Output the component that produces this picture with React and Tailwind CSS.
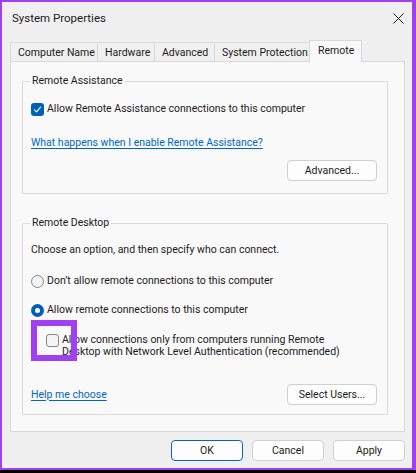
const TABS = [
  { label: 'Computer Name', w: 'w-[88px]' },
  { label: 'Hardware', w: 'w-[58px]' },
  { label: 'Advanced', w: 'w-[61px]' },
  { label: 'System Protection', w: 'w-[96px]' },
];

function CheckBox({ checked }) {
  if (checked) {
    return (
      <span className="block w-[13px] h-[13px] shrink-0 rounded-[3px] bg-[#005fb8] flex items-center justify-center">
        <svg width="9" height="9" viewBox="0 0 9 9" fill="none">
          <path d="M1.5 4.8 L3.6 6.8 L7.6 2.2" stroke="#fff" strokeWidth="1.1" strokeLinecap="round" strokeLinejoin="round" />
        </svg>
      </span>
    );
  }
  return <span className="block w-[13px] h-[13px] shrink-0 rounded-[3px] border border-[#868686] bg-[#f4f4f4]" />;
}

function Radio({ checked }) {
  if (checked) {
    return (
      <span className="w-[13px] h-[13px] shrink-0 rounded-full bg-[#005fb8] flex items-center justify-center">
        <span className="w-[5px] h-[5px] rounded-full bg-white" />
      </span>
    );
  }
  return <span className="w-[13px] h-[13px] shrink-0 rounded-full border border-[#868686] bg-[#f4f4f4]" />;
}

function Button({ children, primary, className = '' }) {
  return (
    <button
      className={
        'h-[21px] rounded-[4px] bg-[#fdfdfd] text-[#1b1b1b] leading-[16px] flex items-center justify-center ' +
        (primary ? 'border border-[#0067c0] ' : 'border border-[#d0d0d0] ') +
        className
      }
    >
      {children}
    </button>
  );
}

function Group({ title, children, className = '' }) {
  return (
    <fieldset className={'border border-[#dcdcdc] rounded-[1px] pl-[8px] pr-[10px] ' + className}>
      <legend className="px-[2px] -ml-[1px] leading-[16px] text-[#1b1b1b]">{title}</legend>
      {children}
    </fieldset>
  );
}

export default function App() {
  return (
    <div className="w-[416px] h-[473px] bg-black pb-[3px]">
      <div className="h-full bg-[#a13ff2] pt-[2px] pl-[2px] pr-[4px] pb-[2px]">
        <div className="h-full bg-[#f0f0f0] flex flex-col text-[10.5px] text-[#1b1b1b] font-['Roboto',sans-serif]">
          {/* title bar */}
          <div className="h-[32px] flex items-center justify-between pl-[10px] pr-[8px]">
            <span className="text-[11.5px] leading-[16px]">System Properties</span>
            <svg width="11" height="11" viewBox="0 0 11 11">
              <path d="M0.5 0.5 L10.5 10.5 M10.5 0.5 L0.5 10.5" stroke="#1b1b1b" strokeWidth="1" />
            </svg>
          </div>

          {/* tabs */}
          <div className="mt-[6px] ml-[8px] flex items-end h-[21px]">
            {TABS.map((t) => (
              <div
                key={t.label}
                className={
                  t.w +
                  ' h-[19px] border border-b-0 border-[#d9d9d9] -ml-px first:ml-0 bg-[#f0f0f0] pl-[7px] leading-[19px] whitespace-nowrap'
                }
              >
                {t.label}
              </div>
            ))}
            <div className="w-[53px] h-[22px] -ml-px border border-b-0 border-[#d9d9d9] bg-[#f9f9f9] pl-[8px] leading-[19px] relative z-10 -mb-px">
              Remote
            </div>
          </div>

          {/* panel */}
          <div className="ml-[8px] mr-[7px] h-[371px] bg-[#f9f9f9] border border-[#d9d9d9] pt-[11px] pl-[11px] pr-[16px]">
            <Group title="Remote Assistance" className="pb-[12px]">
              <div className="mt-[12px] flex items-center gap-[3px] h-[16px]">
                <CheckBox checked />
                <span className="leading-[16px] whitespace-nowrap">Allow Remote Assistance connections to this computer</span>
              </div>
              <div className="mt-[18px] h-[16px] leading-[16px]">
                <span className="text-[#0067c0] underline underline-offset-[2px]">What happens when I enable Remote Assistance?</span>
              </div>
              <div className="mt-[9px] flex justify-end">
                <Button className="w-[90px]">Advanced...</Button>
              </div>
            </Group>

            <Group title="Remote Desktop" className="mt-[21px] pb-[9px]">
              <div className="mt-[11px] leading-[16px] h-[16px]">Choose an option, and then specify who can connect.</div>
              <div className="mt-[15px] flex items-center gap-[3px] h-[16px]">
                <Radio />
                <span className="leading-[16px]">Don’t allow remote connections to this computer</span>
              </div>
              <div className="mt-[13px] flex items-center gap-[3px] h-[16px]">
                <Radio checked />
                <span className="leading-[16px]">Allow remote connections to this computer</span>
              </div>
              <div className="mt-[16px] ml-[15px] flex items-start gap-[3px] relative">
                <CheckBox />
                <span className="leading-[12px] whitespace-nowrap">
                  Allow connections only from computers running Remote
                  <br />
                  Desktop with Network Level Authentication (recommended)
                </span>
                <div className="absolute -left-[15px] -top-[14px] w-[46px] h-[41px] border-[6px] border-[#a13ff2]" />
              </div>
              <div className="mt-[26px] flex items-center justify-between">
                <span className="text-[#0067c0] underline underline-offset-[2px] leading-[16px]">Help me choose</span>
                <Button className="w-[90px] h-[20px]">Select Users...</Button>
              </div>
            </Group>
          </div>

          {/* footer buttons */}
          <div className="mt-[8px] mr-[7px] flex justify-end gap-[9px]">
            <Button primary className="w-[72px]">OK</Button>
            <Button className="w-[72px]">Cancel</Button>
            <Button className="w-[72px]">Apply</Button>
          </div>
        </div>
      </div>
    </div>
  );
}
